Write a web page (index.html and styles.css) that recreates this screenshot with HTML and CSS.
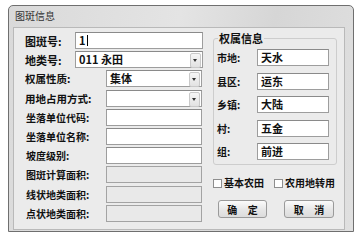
FILE: index.html
```html
<!DOCTYPE html>
<html lang="zh-CN">
<head>
    <meta charset="UTF-8">
    <title>图斑信息</title>
    <link rel="stylesheet" href="styles.css">
</head>
<body>
    <div class="window">
        <div class="titlebar">图斑信息</div>
        <div class="client">
            <div class="left">
                <div class="row"><span class="label short">图斑号:</span><div class="box wide">1<span class="caret"></span></div></div>
                <div class="row"><span class="label short">地类号:</span><div class="box wide combo"><span>011 永田</span><span class="arrow"></span></div></div>
                <div class="row"><span class="label">权属性质:</span><div class="box combo"><span>集体</span><span class="arrow"></span></div></div>
                <div class="row"><span class="label">用地占用方式:</span><div class="box combo"><span></span><span class="arrow"></span></div></div>
                <div class="row"><span class="label small">坐落单位代码:</span><div class="box"></div></div>
                <div class="row"><span class="label small">坐落单位名称:</span><div class="box"></div></div>
                <div class="row"><span class="label small">坡度级别:</span><div class="box"></div></div>
                <div class="row"><span class="label small">图斑计算面积:</span><div class="box disabled"></div></div>
                <div class="row"><span class="label small">线状地类面积:</span><div class="box disabled"></div></div>
                <div class="row"><span class="label small">点状地类面积:</span><div class="box disabled"></div></div>
            </div>
            <div class="right">
                <fieldset class="group">
                    <legend>权属信息</legend>
                    <div class="grow"><span class="glabel">市地:</span><div class="box gbox">天水</div></div>
                    <div class="grow"><span class="glabel">县区:</span><div class="box gbox">运东</div></div>
                    <div class="grow"><span class="glabel">乡镇:</span><div class="box gbox">大陆</div></div>
                    <div class="grow"><span class="glabel">村:</span><div class="box gbox">五金</div></div>
                    <div class="grow"><span class="glabel">组:</span><div class="box gbox">前进</div></div>
                </fieldset>
                <div class="checks">
                    <span class="check"><span class="tick"></span>基本农田</span>
                    <span class="check"><span class="tick"></span>农用地转用</span>
                </div>
                <div class="buttons">
                    <button class="btn">确 定</button>
                    <button class="btn">取 消</button>
                </div>
            </div>
        </div>
    </div>
</body>
</html>
```

FILE: styles.css
```css
body {
    margin: 0;
    background: #ffffff;
    font-family: "Noto Sans CJK SC", "Liberation Sans", sans-serif;
    color: #111;
}
.window {
    margin: 5px 0 0 8px;
    width: 332px;
    height: 225px;
    padding: 0 8px 0 4px;
    border: 1px solid #6f6f6f;
    border-radius: 5px 5px 0 0;
    background: linear-gradient(100deg, #d9d9d9 0%, #e4e4e4 45%, #d6d6d6 70%, #e0e0e0 100%);
}
.titlebar {
    height: 21px;
    line-height: 20px;
    padding-left: 2px;
    font-size: 10px;
    color: #333;
}
.client {
    display: flex;
    height: 197px;
    padding: 4px 0 0 11px;
    border: 1px solid #b9b9b9;
    background: #ebebeb;
}
.left {
    display: flex;
    flex-direction: column;
    gap: 2.2px;
    width: 178px;
}
.row {
    display: flex;
    align-items: center;
    height: 17px;
}
.label {
    width: 81px;
    font-size: 10.5px;
    font-weight: bold;
    white-space: nowrap;
}
.label.short {
    width: 50px;
    font-size: 11px;
}
.label.small {
    padding-left: 1px;
    width: 80px;
    font-size: 10px;
}
.box {
    box-sizing: border-box;
    width: 96px;
    height: 17px;
    padding-left: 3px;
    border: 1px solid #9d9d9d;
    border-top-color: #8a8a8a;
    background: #fff;
    font-size: 11px;
    font-weight: bold;
    line-height: 15px;
    white-space: nowrap;
}
.box.wide {
    width: 128px;
}
.box.disabled {
    background: #e9e9e9;
    border-color: #a3a3a3;
}
.caret {
    display: inline-block;
    width: 1px;
    height: 11px;
    margin-left: 1px;
    vertical-align: -1px;
    background: #000;
}
.combo {
    display: flex;
    justify-content: space-between;
    padding-right: 1px;
}
.arrow {
    position: relative;
    width: 9px;
    height: 13px;
    margin-top: 1px;
    border: 1px solid #c9c9c9;
    border-radius: 2px;
    background: linear-gradient(#f6f6f6, #e2e2e2);
}
.arrow::after {
    content: "";
    position: absolute;
    left: 2px;
    top: 5px;
    border-left: 2.5px solid transparent;
    border-right: 2.5px solid transparent;
    border-top: 3px solid #333;
}
.right {
    width: 124px;
    margin-left: 10px;
}
.group {
    margin: 0;
    padding: 5px 7px 4px 3px;
    border: 1px solid #cdcdcd;
    border-radius: 3px;
    display: flex;
    flex-direction: column;
    gap: 6.5px;
}
.group legend {
    margin-left: 1px;
    padding: 0 1px;
    font-size: 11px;
    font-weight: bold;
    line-height: 12px;
}
.grow {
    display: flex;
    align-items: center;
    height: 17px;
}
.glabel {
    width: 40px;
    font-size: 10px;
    font-weight: bold;
}
.box.gbox {
    width: 72px;
}
.checks {
    display: flex;
    margin-top: 12px;
    height: 12px;
    font-size: 10px;
    font-weight: bold;
    line-height: 12px;
}
.check {
    display: flex;
    align-items: center;
    white-space: nowrap;
}
.check + .check {
    margin-left: 10px;
}
.tick {
    box-sizing: border-box;
    width: 9px;
    height: 9px;
    margin-right: 2px;
    border: 1px solid #8e8e8e;
    background: #fff;
}
.buttons {
    display: flex;
    gap: 17px;
    margin: 11px 0 0 5px;
}
.btn {
    box-sizing: border-box;
    width: 49px;
    height: 18px;
    padding: 0;
    border: 1px solid #9a9a9a;
    border-radius: 3px;
    background: linear-gradient(#fbfbfb, #e6e6e6 55%, #dcdcdc);
    font-family: "Noto Sans CJK SC", sans-serif;
    font-size: 10px;
    font-weight: bold;
    letter-spacing: 4px;
    text-indent: 4px;
    color: #111;
}
.btn + .btn {
    width: 50px;
}
```
